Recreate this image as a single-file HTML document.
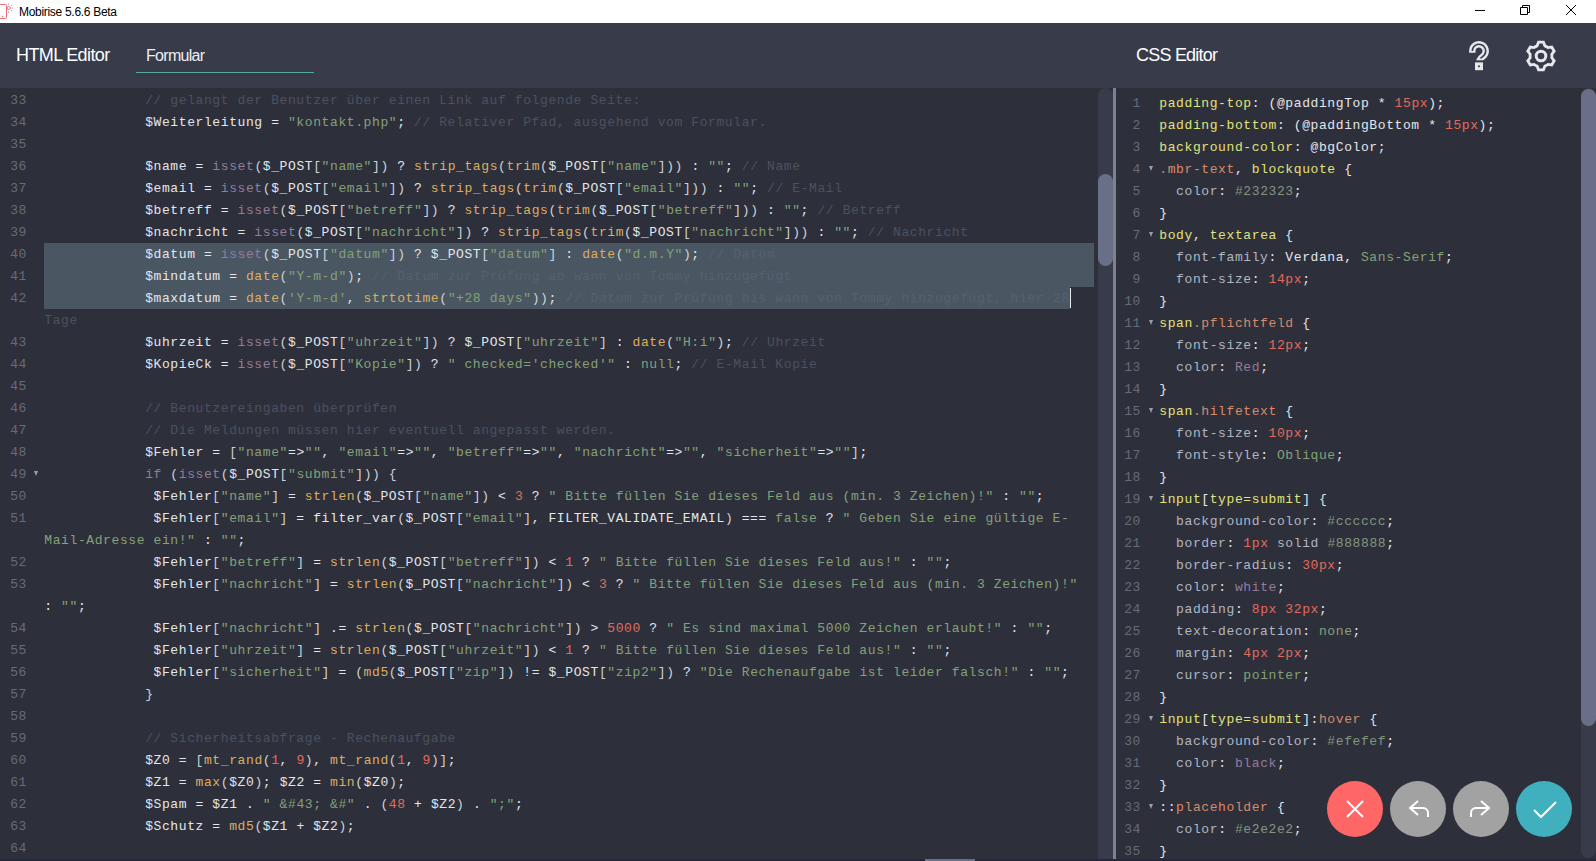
<!DOCTYPE html>
<html lang="de">
<head>
<meta charset="utf-8">
<title>Mobirise 5.6.6 Beta</title>
<style>
*{box-sizing:border-box;margin:0;padding:0}
html,body{width:1596px;height:861px;overflow:hidden;background:#2d303b}
body{position:relative;font-family:"Liberation Sans",sans-serif}
i{font-style:normal}
#titlebar{position:absolute;left:0;top:0;width:1596px;height:23px;background:#fff}
#titlebar .ttl{position:absolute;left:19px;top:5px;font-size:12px;line-height:15px;letter-spacing:-0.3px;color:#000;white-space:nowrap}
#titlebar svg{position:absolute}
#header{position:absolute;left:0;top:23px;width:1596px;height:65px;background:#383c4a}
#header .h1{position:absolute;top:20px;font-size:18px;line-height:24px;color:#fff;white-space:nowrap}
#header .tab{position:absolute;left:146px;top:22px;font-size:16px;line-height:22px;letter-spacing:-0.7px;color:#eceef2;white-space:nowrap}
#header .ul{position:absolute;left:136px;top:49px;width:178px;height:1px;background:#52aaa3}
#header svg{position:absolute}
.ed{position:absolute;top:88px;height:771px;background:#2d303b;overflow:hidden;font-family:"Liberation Mono",monospace;font-size:13px;letter-spacing:0.6px;line-height:22px}
#left{left:0;width:1098px}
#right{left:1116px;width:465px}
.gn{position:absolute;height:22px;color:#676b78;text-align:right;white-space:pre}
#left .gn{left:0;width:27px}
#right .gn{left:0;width:25px}
.fa{position:absolute;top:7px;width:0;height:0;border-left:2.5px solid transparent;border-right:2.5px solid transparent;border-top:5.5px solid #9a9eaa}
#left .fa{left:33.5px}
#right .fa{left:32.5px}
.ln{position:absolute;height:22px;white-space:pre;color:#e4e6ea}
#left .ln{left:44.3px}
#right .ln{left:43.3px}
.sel{position:absolute;left:44px;background:#4a5763}
.cur{position:absolute;width:1px;background:#e8e8e8}
.v{color:#e4e6ea}
.c{color:#4c515e}
.sl .c{color:#56616f}
.s{color:#86a077}
.k{color:#937c9a}
.f{color:#dcae60}
.n{color:#e26b5b}
.p{color:#cfd2d8}
.y{color:#e0e27c}
.pr{color:#b0b7c2}
.hx{color:#84957f}
.o{color:#d98a6a}
#lsb{position:absolute;left:1098px;top:88px;width:15px;height:771px;background:#383c4a;border-radius:8px 8px 0 0}
#lsb .th{position:absolute;left:0;top:86px;width:15px;height:92px;border-radius:8px;background:#6a6f88}
#div{position:absolute;left:1113px;top:88px;width:3px;height:771px;background:#7d828f}
#rsb{position:absolute;left:1581px;top:88px;width:15px;height:770px;background:#383c4a;border-radius:8px}
#rsb .th{position:absolute;left:0;top:1px;width:15px;height:637px;border-radius:8px;background:#6a6f88}
#bot{position:absolute;left:0;top:859px;width:1596px;height:2px;background:#252838}
#bot .th{position:absolute;left:925px;top:0;width:50px;height:2px;background:#6a6f88}
.btn{position:absolute;top:781px;width:56px;height:56px;border-radius:50%}
.btn svg{position:absolute;left:0;top:0}
</style>
</head>
<body>
<div id="titlebar">
<svg style="left:0;top:0" width="16" height="23" viewBox="0 0 16 23" fill="none" stroke="#e8727c" stroke-width="1"><path d="M-3 4.5h8.5a1 1 0 0 1 1 1v12a1 1 0 0 1-1 1h-8.5"/><circle cx="2.5" cy="16.5" r=".4" fill="#e8727c"/><circle cx="8.7" cy="8" r="1.6"/><path d="M8.7 3.4v1.4M8.7 11.2v1.6M12 5l-1 1M13.2 8h-1.4M12 11l-1-1" stroke-width=".9"/></svg>
<span class="ttl">Mobirise 5.6.6 Beta</span>
<svg style="left:1470px;top:0" width="112" height="23" viewBox="0 0 112 23" fill="none" stroke="#000" stroke-width="1"><path d="M5 10.5h10"/><path d="M50.5 7.5h7v7h-7zM52.500 7.500v-2h7v7h-2"/><path d="M96 5l10 10M106 5l-10 10"/></svg>
</div>
<div id="header">
<span class="h1" style="left:16px;letter-spacing:-0.62px">HTML Editor</span>
<span class="tab">Formular</span>
<div class="ul"></div>
<span class="h1" style="left:1136px;letter-spacing:-0.78px">CSS Editor</span>
<svg style="left:1456px;top:9px" width="50" height="46" viewBox="0 0 50 46" fill="none"><path d="M16.300 20.800V19A6.700 6.700 0 1 1 28.100 23.300L24.800 26.300Q23 28 23 31" stroke="#e6e8ee" stroke-width="6.400" stroke-linejoin="round"/><path d="M16.300 18.900A6.700 6.700 0 1 1 28 23.400L24.500 26.300" stroke="#383c4a" stroke-width="1.500" stroke-linejoin="round"/><rect x="14" y="28.300" width="18" height="6" fill="#383c4a"/><rect x="19" y="30.400" width="8" height="7.800" fill="#e6e8ee"/><rect x="22.100" y="33.400" width="1.800" height="1.800" fill="#383c4a"/></svg>
<svg style="left:1523px;top:14.9px" width="36" height="36" viewBox="-18 -18 36 36" fill="none" stroke="#e6e8ee" stroke-width="2.8" stroke-linejoin="miter"><circle r="4.8" stroke-width="3"/><path d="M-3.91 -10.18L-2.43 -13.79 L2.43 -13.79 L3.91 -10.18A10.90 10.90 0 0 1 6.86 -8.47L10.72 -9.00 L13.16 -4.79 L10.77 -1.71A10.90 10.90 0 0 1 10.77 1.71L13.16 4.79 L10.72 9.00 L6.86 8.47A10.90 10.90 0 0 1 3.91 10.18L2.43 13.79 L-2.43 13.79 L-3.91 10.18A10.90 10.90 0 0 1 -6.86 8.47L-10.72 9.00 L-13.16 4.79 L-10.77 1.71A10.90 10.90 0 0 1 -10.77 -1.71L-13.16 -4.79 L-10.72 -9.00 L-6.86 -8.47A10.90 10.90 0 0 1 -3.91 -10.18Z"/></svg>
</div>

<div class="ed" id="left">
<div class="sel" style="top:155px;width:1050px;height:44px"></div>
<div class="sel" style="top:199px;width:1026px;height:22px"></div>
<div class="cur" style="left:1070px;top:200px;height:20px"></div>
<div class="gn" style="top:2px">33</div>
<div class="gn" style="top:24px">34</div>
<div class="gn" style="top:46px">35</div>
<div class="gn" style="top:68px">36</div>
<div class="gn" style="top:90px">37</div>
<div class="gn" style="top:112px">38</div>
<div class="gn" style="top:134px">39</div>
<div class="gn" style="top:156px">40</div>
<div class="gn" style="top:178px">41</div>
<div class="gn" style="top:200px">42</div>
<div class="gn" style="top:244px">43</div>
<div class="gn" style="top:266px">44</div>
<div class="gn" style="top:288px">45</div>
<div class="gn" style="top:310px">46</div>
<div class="gn" style="top:332px">47</div>
<div class="gn" style="top:354px">48</div>
<div class="gn" style="top:376px">49<b class="fa"></b></div>
<div class="gn" style="top:398px">50</div>
<div class="gn" style="top:420px">51</div>
<div class="gn" style="top:464px">52</div>
<div class="gn" style="top:486px">53</div>
<div class="gn" style="top:530px">54</div>
<div class="gn" style="top:552px">55</div>
<div class="gn" style="top:574px">56</div>
<div class="gn" style="top:596px">57</div>
<div class="gn" style="top:618px">58</div>
<div class="gn" style="top:640px">59</div>
<div class="gn" style="top:662px">60</div>
<div class="gn" style="top:684px">61</div>
<div class="gn" style="top:706px">62</div>
<div class="gn" style="top:728px">63</div>
<div class="gn" style="top:750px">64</div>
<div class="ln" style="top:2px">            <i class="c">// gelangt der Benutzer über einen Link auf folgende Seite:</i></div>
<div class="ln" style="top:24px">            <i class="v">$Weiterleitung</i> <i class="v">=</i> <i class="s">"kontakt.php"</i><i class="v">;</i> <i class="c">// Relativer Pfad, ausgehend vom Formular.</i></div>
<div class="ln" style="top:46px"></div>
<div class="ln" style="top:68px">            <i class="v">$name</i> <i class="v">=</i> <i class="k">isset</i><i class="p">(</i><i class="v">$_POST</i><i class="p">[</i><i class="s">"name"</i><i class="p">]</i><i class="p">)</i> <i class="v">?</i> <i class="f">strip_tags</i><i class="p">(</i><i class="f">trim</i><i class="p">(</i><i class="v">$_POST</i><i class="p">[</i><i class="s">"name"</i><i class="p">]</i><i class="p">)</i><i class="p">)</i> <i class="v">:</i> <i class="s">""</i><i class="v">;</i> <i class="c">// Name</i></div>
<div class="ln" style="top:90px">            <i class="v">$email</i> <i class="v">=</i> <i class="k">isset</i><i class="p">(</i><i class="v">$_POST</i><i class="p">[</i><i class="s">"email"</i><i class="p">]</i><i class="p">)</i> <i class="v">?</i> <i class="f">strip_tags</i><i class="p">(</i><i class="f">trim</i><i class="p">(</i><i class="v">$_POST</i><i class="p">[</i><i class="s">"email"</i><i class="p">]</i><i class="p">)</i><i class="p">)</i> <i class="v">:</i> <i class="s">""</i><i class="v">;</i> <i class="c">// E-Mail</i></div>
<div class="ln" style="top:112px">            <i class="v">$betreff</i> <i class="v">=</i> <i class="k">isset</i><i class="p">(</i><i class="v">$_POST</i><i class="p">[</i><i class="s">"betreff"</i><i class="p">]</i><i class="p">)</i> <i class="v">?</i> <i class="f">strip_tags</i><i class="p">(</i><i class="f">trim</i><i class="p">(</i><i class="v">$_POST</i><i class="p">[</i><i class="s">"betreff"</i><i class="p">]</i><i class="p">)</i><i class="p">)</i> <i class="v">:</i> <i class="s">""</i><i class="v">;</i> <i class="c">// Betreff</i></div>
<div class="ln" style="top:134px">            <i class="v">$nachricht</i> <i class="v">=</i> <i class="k">isset</i><i class="p">(</i><i class="v">$_POST</i><i class="p">[</i><i class="s">"nachricht"</i><i class="p">]</i><i class="p">)</i> <i class="v">?</i> <i class="f">strip_tags</i><i class="p">(</i><i class="f">trim</i><i class="p">(</i><i class="v">$_POST</i><i class="p">[</i><i class="s">"nachricht"</i><i class="p">]</i><i class="p">)</i><i class="p">)</i> <i class="v">:</i> <i class="s">""</i><i class="v">;</i> <i class="c">// Nachricht</i></div>
<div class="ln sl" style="top:156px">            <i class="v">$datum</i> <i class="v">=</i> <i class="k">isset</i><i class="p">(</i><i class="v">$_POST</i><i class="p">[</i><i class="s">"datum"</i><i class="p">]</i><i class="p">)</i> <i class="v">?</i> <i class="v">$_POST</i><i class="p">[</i><i class="s">"datum"</i><i class="p">]</i> <i class="v">:</i> <i class="f">date</i><i class="p">(</i><i class="s">"d.m.Y"</i><i class="p">)</i><i class="v">;</i> <i class="c">// Datum</i></div>
<div class="ln sl" style="top:178px">            <i class="v">$mindatum</i> <i class="v">=</i> <i class="f">date</i><i class="p">(</i><i class="s">"Y-m-d"</i><i class="p">)</i><i class="v">;</i> <i class="c">// Datum zur Prüfung ab wann von Tommy hinzugefügt</i></div>
<div class="ln sl" style="top:200px">            <i class="v">$maxdatum</i> <i class="v">=</i> <i class="f">date</i><i class="p">(</i><i class="s">'Y-m-d'</i><i class="v">,</i> <i class="f">strtotime</i><i class="p">(</i><i class="s">"+28 days"</i><i class="p">)</i><i class="p">)</i><i class="v">;</i> <i class="c">// Datum zur Prüfung bis wann von Tommy hinzugefügt, hier 28</i></div>
<div class="ln" style="top:222px"><i class="c">Tage</i></div>
<div class="ln" style="top:244px">            <i class="v">$uhrzeit</i> <i class="v">=</i> <i class="k">isset</i><i class="p">(</i><i class="v">$_POST</i><i class="p">[</i><i class="s">"uhrzeit"</i><i class="p">]</i><i class="p">)</i> <i class="v">?</i> <i class="v">$_POST</i><i class="p">[</i><i class="s">"uhrzeit"</i><i class="p">]</i> <i class="v">:</i> <i class="f">date</i><i class="p">(</i><i class="s">"H:i"</i><i class="p">)</i><i class="v">;</i> <i class="c">// Uhrzeit</i></div>
<div class="ln" style="top:266px">            <i class="v">$KopieCk</i> <i class="v">=</i> <i class="k">isset</i><i class="p">(</i><i class="v">$_POST</i><i class="p">[</i><i class="s">"Kopie"</i><i class="p">]</i><i class="p">)</i> <i class="v">?</i> <i class="s">" checked='checked'"</i> <i class="v">:</i> <i class="s">null</i><i class="v">;</i> <i class="c">// E-Mail Kopie</i></div>
<div class="ln" style="top:288px"></div>
<div class="ln" style="top:310px">            <i class="c">// Benutzereingaben überprüfen</i></div>
<div class="ln" style="top:332px">            <i class="c">// Die Meldungen müssen hier eventuell angepasst werden.</i></div>
<div class="ln" style="top:354px">            <i class="v">$Fehler</i> <i class="v">=</i> <i class="p">[</i><i class="s">"name"</i><i class="v">=</i><i class="v">&gt;</i><i class="s">""</i><i class="v">,</i> <i class="s">"email"</i><i class="v">=</i><i class="v">&gt;</i><i class="s">""</i><i class="v">,</i> <i class="s">"betreff"</i><i class="v">=</i><i class="v">&gt;</i><i class="s">""</i><i class="v">,</i> <i class="s">"nachricht"</i><i class="v">=</i><i class="v">&gt;</i><i class="s">""</i><i class="v">,</i> <i class="s">"sicherheit"</i><i class="v">=</i><i class="v">&gt;</i><i class="s">""</i><i class="p">]</i><i class="v">;</i></div>
<div class="ln" style="top:376px">            <i class="k">if</i> <i class="p">(</i><i class="k">isset</i><i class="p">(</i><i class="v">$_POST</i><i class="p">[</i><i class="s">"submit"</i><i class="p">]</i><i class="p">)</i><i class="p">)</i> <i class="p">{</i></div>
<div class="ln" style="top:398px">             <i class="v">$Fehler</i><i class="p">[</i><i class="s">"name"</i><i class="p">]</i> <i class="v">=</i> <i class="f">strlen</i><i class="p">(</i><i class="v">$_POST</i><i class="p">[</i><i class="s">"name"</i><i class="p">]</i><i class="p">)</i> <i class="v">&lt;</i> <i class="n">3</i> <i class="v">?</i> <i class="s">" Bitte füllen Sie dieses Feld aus (min. 3 Zeichen)!"</i> <i class="v">:</i> <i class="s">""</i><i class="v">;</i></div>
<div class="ln" style="top:420px">             <i class="v">$Fehler</i><i class="p">[</i><i class="s">"email"</i><i class="p">]</i> <i class="v">=</i> <i class="v">filter_var</i><i class="p">(</i><i class="v">$_POST</i><i class="p">[</i><i class="s">"email"</i><i class="p">]</i><i class="v">,</i> <i class="v">FILTER_VALIDATE_EMAIL</i><i class="p">)</i> <i class="v">=</i><i class="v">=</i><i class="v">=</i> <i class="s">false</i> <i class="v">?</i> <i class="s">" Geben Sie eine gültige E-</i></div>
<div class="ln" style="top:442px"><i class="s">Mail-Adresse ein!"</i> <i class="v">:</i> <i class="s">""</i><i class="v">;</i></div>
<div class="ln" style="top:464px">             <i class="v">$Fehler</i><i class="p">[</i><i class="s">"betreff"</i><i class="p">]</i> <i class="v">=</i> <i class="f">strlen</i><i class="p">(</i><i class="v">$_POST</i><i class="p">[</i><i class="s">"betreff"</i><i class="p">]</i><i class="p">)</i> <i class="v">&lt;</i> <i class="n">1</i> <i class="v">?</i> <i class="s">" Bitte füllen Sie dieses Feld aus!"</i> <i class="v">:</i> <i class="s">""</i><i class="v">;</i></div>
<div class="ln" style="top:486px">             <i class="v">$Fehler</i><i class="p">[</i><i class="s">"nachricht"</i><i class="p">]</i> <i class="v">=</i> <i class="f">strlen</i><i class="p">(</i><i class="v">$_POST</i><i class="p">[</i><i class="s">"nachricht"</i><i class="p">]</i><i class="p">)</i> <i class="v">&lt;</i> <i class="n">3</i> <i class="v">?</i> <i class="s">" Bitte füllen Sie dieses Feld aus (min. 3 Zeichen)!"</i></div>
<div class="ln" style="top:508px"><i class="v">:</i> <i class="s">""</i><i class="v">;</i></div>
<div class="ln" style="top:530px">             <i class="v">$Fehler</i><i class="p">[</i><i class="s">"nachricht"</i><i class="p">]</i> <i class="v">.</i><i class="v">=</i> <i class="f">strlen</i><i class="p">(</i><i class="v">$_POST</i><i class="p">[</i><i class="s">"nachricht"</i><i class="p">]</i><i class="p">)</i> <i class="v">&gt;</i> <i class="n">5000</i> <i class="v">?</i> <i class="s">" Es sind maximal 5000 Zeichen erlaubt!"</i> <i class="v">:</i> <i class="s">""</i><i class="v">;</i></div>
<div class="ln" style="top:552px">             <i class="v">$Fehler</i><i class="p">[</i><i class="s">"uhrzeit"</i><i class="p">]</i> <i class="v">=</i> <i class="f">strlen</i><i class="p">(</i><i class="v">$_POST</i><i class="p">[</i><i class="s">"uhrzeit"</i><i class="p">]</i><i class="p">)</i> <i class="v">&lt;</i> <i class="n">1</i> <i class="v">?</i> <i class="s">" Bitte füllen Sie dieses Feld aus!"</i> <i class="v">:</i> <i class="s">""</i><i class="v">;</i></div>
<div class="ln" style="top:574px">             <i class="v">$Fehler</i><i class="p">[</i><i class="s">"sicherheit"</i><i class="p">]</i> <i class="v">=</i> <i class="p">(</i><i class="f">md5</i><i class="p">(</i><i class="v">$_POST</i><i class="p">[</i><i class="s">"zip"</i><i class="p">]</i><i class="p">)</i> <i class="v">!</i><i class="v">=</i> <i class="v">$_POST</i><i class="p">[</i><i class="s">"zip2"</i><i class="p">]</i><i class="p">)</i> <i class="v">?</i> <i class="s">"Die Rechenaufgabe ist leider falsch!"</i> <i class="v">:</i> <i class="s">""</i><i class="v">;</i></div>
<div class="ln" style="top:596px">            <i class="p">}</i></div>
<div class="ln" style="top:618px"></div>
<div class="ln" style="top:640px">            <i class="c">// Sicherheitsabfrage - Rechenaufgabe</i></div>
<div class="ln" style="top:662px">            <i class="v">$Z0</i> <i class="v">=</i> <i class="p">[</i><i class="f">mt_rand</i><i class="p">(</i><i class="n">1</i><i class="v">,</i> <i class="n">9</i><i class="p">)</i><i class="v">,</i> <i class="f">mt_rand</i><i class="p">(</i><i class="n">1</i><i class="v">,</i> <i class="n">9</i><i class="p">)</i><i class="p">]</i><i class="v">;</i></div>
<div class="ln" style="top:684px">            <i class="v">$Z1</i> <i class="v">=</i> <i class="f">max</i><i class="p">(</i><i class="v">$Z0</i><i class="p">)</i><i class="v">;</i> <i class="v">$Z2</i> <i class="v">=</i> <i class="f">min</i><i class="p">(</i><i class="v">$Z0</i><i class="p">)</i><i class="v">;</i></div>
<div class="ln" style="top:706px">            <i class="v">$Spam</i> <i class="v">=</i> <i class="v">$Z1</i> <i class="v">.</i> <i class="s">" &amp;#43; &amp;#"</i> <i class="v">.</i> <i class="p">(</i><i class="n">48</i> <i class="v">+</i> <i class="v">$Z2</i><i class="p">)</i> <i class="v">.</i> <i class="s">";"</i><i class="v">;</i></div>
<div class="ln" style="top:728px">            <i class="v">$Schutz</i> <i class="v">=</i> <i class="f">md5</i><i class="p">(</i><i class="v">$Z1</i> <i class="v">+</i> <i class="v">$Z2</i><i class="p">)</i><i class="v">;</i></div>
<div class="ln" style="top:750px"></div>
</div>
<div id="lsb"><div class="th"></div></div>
<div id="div"></div>
<div class="ed" id="right">
<div class="gn" style="top:5px">1</div>
<div class="gn" style="top:27px">2</div>
<div class="gn" style="top:49px">3</div>
<div class="gn" style="top:71px">4<b class="fa"></b></div>
<div class="gn" style="top:93px">5</div>
<div class="gn" style="top:115px">6</div>
<div class="gn" style="top:137px">7<b class="fa"></b></div>
<div class="gn" style="top:159px">8</div>
<div class="gn" style="top:181px">9</div>
<div class="gn" style="top:203px">10</div>
<div class="gn" style="top:225px">11<b class="fa"></b></div>
<div class="gn" style="top:247px">12</div>
<div class="gn" style="top:269px">13</div>
<div class="gn" style="top:291px">14</div>
<div class="gn" style="top:313px">15<b class="fa"></b></div>
<div class="gn" style="top:335px">16</div>
<div class="gn" style="top:357px">17</div>
<div class="gn" style="top:379px">18</div>
<div class="gn" style="top:401px">19<b class="fa"></b></div>
<div class="gn" style="top:423px">20</div>
<div class="gn" style="top:445px">21</div>
<div class="gn" style="top:467px">22</div>
<div class="gn" style="top:489px">23</div>
<div class="gn" style="top:511px">24</div>
<div class="gn" style="top:533px">25</div>
<div class="gn" style="top:555px">26</div>
<div class="gn" style="top:577px">27</div>
<div class="gn" style="top:599px">28</div>
<div class="gn" style="top:621px">29<b class="fa"></b></div>
<div class="gn" style="top:643px">30</div>
<div class="gn" style="top:665px">31</div>
<div class="gn" style="top:687px">32</div>
<div class="gn" style="top:709px">33<b class="fa"></b></div>
<div class="gn" style="top:731px">34</div>
<div class="gn" style="top:753px">35</div>
<div class="ln" style="top:5px"><i class="y">padding-top</i><i class="v">:</i> <i class="v">(@paddingTop</i> <i class="v">*</i> <i class="n">15px</i><i class="v">);</i></div>
<div class="ln" style="top:27px"><i class="y">padding-bottom</i><i class="v">:</i> <i class="v">(@paddingBottom</i> <i class="v">*</i> <i class="n">15px</i><i class="v">);</i></div>
<div class="ln" style="top:49px"><i class="y">background-color</i><i class="v">:</i> <i class="v">@bgColor;</i></div>
<div class="ln" style="top:71px"><i class="o">.mbr-text</i><i class="v">,</i> <i class="y">blockquote</i> <i class="v">{</i></div>
<div class="ln" style="top:93px">  <i class="pr">color</i><i class="v">:</i> <i class="hx">#232323</i><i class="v">;</i></div>
<div class="ln" style="top:115px"><i class="v">}</i></div>
<div class="ln" style="top:137px"><i class="y">body</i><i class="v">,</i> <i class="y">textarea</i> <i class="v">{</i></div>
<div class="ln" style="top:159px">  <i class="pr">font-family</i><i class="v">:</i> <i class="v">Verdana</i><i class="v">,</i> <i class="s">Sans-Serif</i><i class="v">;</i></div>
<div class="ln" style="top:181px">  <i class="pr">font-size</i><i class="v">:</i> <i class="n">14px</i><i class="v">;</i></div>
<div class="ln" style="top:203px"><i class="v">}</i></div>
<div class="ln" style="top:225px"><i class="y">span</i><i class="o">.pflichtfeld</i> <i class="v">{</i></div>
<div class="ln" style="top:247px">  <i class="pr">font-size</i><i class="v">:</i> <i class="n">12px</i><i class="v">;</i></div>
<div class="ln" style="top:269px">  <i class="pr">color</i><i class="v">:</i> <i class="k">Red</i><i class="v">;</i></div>
<div class="ln" style="top:291px"><i class="v">}</i></div>
<div class="ln" style="top:313px"><i class="y">span</i><i class="o">.hilfetext</i> <i class="v">{</i></div>
<div class="ln" style="top:335px">  <i class="pr">font-size</i><i class="v">:</i> <i class="n">10px</i><i class="v">;</i></div>
<div class="ln" style="top:357px">  <i class="pr">font-style</i><i class="v">:</i> <i class="s">Oblique</i><i class="v">;</i></div>
<div class="ln" style="top:379px"><i class="v">}</i></div>
<div class="ln" style="top:401px"><i class="y">input</i><i class="v">[</i><i class="y">type</i><i class="y">=</i><i class="y">submit</i><i class="v">]</i> <i class="v">{</i></div>
<div class="ln" style="top:423px">  <i class="pr">background-color</i><i class="v">:</i> <i class="hx">#cccccc</i><i class="v">;</i></div>
<div class="ln" style="top:445px">  <i class="pr">border</i><i class="v">:</i> <i class="n">1px</i> <i class="pr">solid</i> <i class="hx">#888888</i><i class="v">;</i></div>
<div class="ln" style="top:467px">  <i class="pr">border-radius</i><i class="v">:</i> <i class="n">30px</i><i class="v">;</i></div>
<div class="ln" style="top:489px">  <i class="pr">color</i><i class="v">:</i> <i class="k">white</i><i class="v">;</i></div>
<div class="ln" style="top:511px">  <i class="pr">padding</i><i class="v">:</i> <i class="n">8px</i> <i class="n">32px</i><i class="v">;</i></div>
<div class="ln" style="top:533px">  <i class="pr">text-decoration</i><i class="v">:</i> <i class="s">none</i><i class="v">;</i></div>
<div class="ln" style="top:555px">  <i class="pr">margin</i><i class="v">:</i> <i class="n">4px</i> <i class="n">2px</i><i class="v">;</i></div>
<div class="ln" style="top:577px">  <i class="pr">cursor</i><i class="v">:</i> <i class="s">pointer</i><i class="v">;</i></div>
<div class="ln" style="top:599px"><i class="v">}</i></div>
<div class="ln" style="top:621px"><i class="y">input</i><i class="v">[</i><i class="y">type</i><i class="y">=</i><i class="y">submit</i><i class="v">]</i><i class="v">:</i><i class="o">hover</i> <i class="v">{</i></div>
<div class="ln" style="top:643px">  <i class="pr">background-color</i><i class="v">:</i> <i class="hx">#efefef</i><i class="v">;</i></div>
<div class="ln" style="top:665px">  <i class="pr">color</i><i class="v">:</i> <i class="k">black</i><i class="v">;</i></div>
<div class="ln" style="top:687px"><i class="v">}</i></div>
<div class="ln" style="top:709px"><i class="v">::</i><i class="o">placeholder</i> <i class="v">{</i></div>
<div class="ln" style="top:731px">  <i class="pr">color</i><i class="v">:</i> <i class="hx">#e2e2e2</i><i class="v">;</i></div>
<div class="ln" style="top:753px"><i class="v">}</i></div>
</div>
<div id="rsb"><div class="th"></div></div>
<div id="bot"><div class="th"></div></div>

<div class="btn" style="left:1327px;background:#ff6666"><svg width="56" height="56" viewBox="0 0 56 56" fill="none" stroke="#fff" stroke-width="2"><path d="M20 20l16 16M36 20l-16 16"/></svg></div>
<div class="btn" style="left:1390px;background:#a2a2a2"><svg width="56" height="56" viewBox="0 0 56 56" fill="none" stroke="#fff" stroke-width="2"><path d="M28 20l-8 7 8 7M20 27h13a5 5 0 0 1 5 5v4"/></svg></div>
<div class="btn" style="left:1453px;background:#a2a2a2"><svg width="56" height="56" viewBox="0 0 56 56" fill="none" stroke="#fff" stroke-width="2"><path d="M28 20l8 7-8 7M36 27h-13a5 5 0 0 0-5 5v4"/></svg></div>
<div class="btn" style="left:1516px;background:#40b0bf"><svg width="56" height="56" viewBox="0 0 56 56" fill="none" stroke="#fff" stroke-width="2"><path d="M18 29l7 7 15-15"/></svg></div>
</body>
</html>
